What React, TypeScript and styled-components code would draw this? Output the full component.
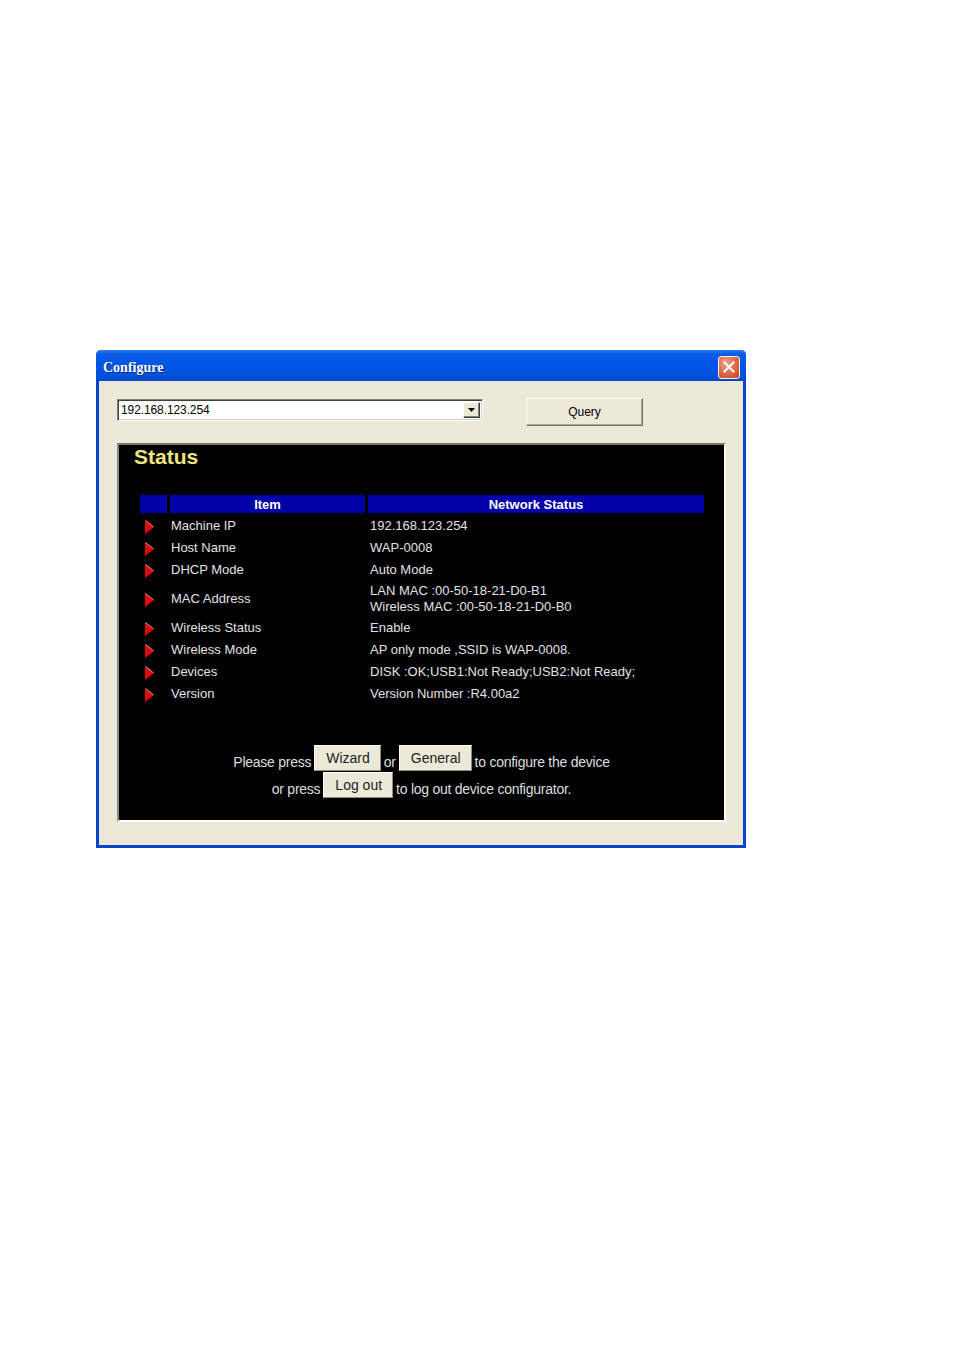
import React from 'react';
import styled, { createGlobalStyle } from 'styled-components';

const Global = createGlobalStyle`
  html, body { margin: 0; padding: 0; background: #ffffff; }
  body { font-family: "Liberation Sans", Arial, sans-serif; }
  * { box-sizing: border-box; }
`;

const Page = styled.div`
  width: 953px;
  height: 1352px;
  padding: 350px 0 0 96px;
`;

const Window = styled.div`
  width: 650px;
  height: 498px;
  display: flex;
  flex-direction: column;
  background: #0845cc;
  border-radius: 5px 5px 0 0;
  overflow: hidden;
`;

const TitleBar = styled.div`
  height: 31px;
  flex: none;
  display: flex;
  align-items: center;
  justify-content: space-between;
  padding: 0 6px 0 7px;
  background: linear-gradient(180deg, #2f7ef0 0%, #0a5ee6 12%, #0055e5 45%, #0052e0 80%, #0047c8 100%);
`;

const Title = styled.span`
  font-family: "Liberation Serif", "Times New Roman", serif;
  font-weight: bold;
  font-size: 14px;
  color: #ffffff;
  text-shadow: 1px 1px 0 #0a2a7a;
  padding-top: 4px;
`;

const CloseBtn = styled.div`
  width: 22px;
  height: 23px;
  border: 1px solid #f4f0ee;
  border-radius: 3px;
  background: radial-gradient(circle at 35% 30%, #f0a58a 0%, #e0704c 45%, #c8431f 100%);
  display: flex;
  align-items: center;
  justify-content: center;
  margin-top: 3px;
`;

const Body = styled.div`
  flex: 1;
  margin: 0 3px 3px 3px;
  background: #ece9d8;
  padding: 17px 17px 0 18px;
  display: flex;
  flex-direction: column;
`;

const TopRow = styled.div`
  display: flex;
  align-items: flex-start;
  gap: 43px;
`;

const Combo = styled.div`
  width: 366px;
  height: 22px;
  margin-top: 1px;
  background: #ffffff;
  border-top: 1px solid #808080;
  border-left: 1px solid #808080;
  border-right: 1px solid #ffffff;
  border-bottom: 1px solid #ffffff;
  box-shadow: inset 1px 1px 0 #404040, inset -1px -1px 0 #d4d0c8;
  display: flex;
  align-items: center;
  justify-content: space-between;
  padding: 2px 2px 2px 3px;
`;

const ComboText = styled.span`
  font-size: 12px;
  color: #000000;
  letter-spacing: -0.1px;
`;

const DropBtn = styled.div`
  width: 17px;
  height: 16px;
  background: #ece9d8;
  border-top: 1px solid #ffffff;
  border-left: 1px solid #ffffff;
  border-right: 1px solid #404040;
  border-bottom: 1px solid #404040;
  box-shadow: inset -1px -1px 0 #808080;
  display: flex;
  align-items: center;
  justify-content: center;
`;

const QueryBtn = styled.div`
  width: 117px;
  height: 28px;
  background: #ece9d8;
  border-top: 1px solid #ffffff;
  border-left: 1px solid #ffffff;
  border-right: 1px solid #716f64;
  border-bottom: 1px solid #716f64;
  box-shadow: inset -1px -1px 0 #aca899;
  display: flex;
  align-items: center;
  justify-content: center;
  font-size: 12px;
  color: #000000;
`;

const Panel = styled.div`
  margin-top: 17px;
  width: 609px;
  height: 379px;
  background: #000000;
  border-top: 2px solid #7a7a72;
  border-left: 2px solid #8a8a82;
  border-right: 2px solid #ffffff;
  border-bottom: 2px solid #ffffff;
  display: flex;
  flex-direction: column;
`;

const StatusTitle = styled.div`
  padding-left: 15px;
  font-size: 21px;
  line-height: 24px;
  font-weight: bold;
  color: #f1e47c;
`;

const Table = styled.div`
  margin: 26px 0 0 21px;
  width: 564px;
  display: grid;
  grid-template-columns: 27px 195px 336px;
  column-gap: 3px;
`;

const HeadCell = styled.div`
  height: 18px;
  margin-bottom: 1px;
  background: #0000a8;
  color: #ffffff;
  font-weight: bold;
  font-size: 13px;
  display: flex;
  align-items: center;
  justify-content: center;
`;

const Cell = styled.div<{ $tall?: boolean }>`
  min-height: ${p => (p.$tall ? 36 : 22)}px;
  display: flex;
  flex-direction: column;
  justify-content: center;
  font-size: 13px;
  line-height: 16px;
  color: #e2e2e2;
  padding-top: 1px;
`;

const IconCell = styled(Cell)`
  padding-left: 5px;
  padding-top: 3px;
`;

const ItemCell = styled(Cell)`
  padding-left: 1px;
`;

const ValueCell = styled(Cell)`
  padding-left: 2px;
`;

const Bottom = styled.div`
  margin-top: 41px;
  display: flex;
  flex-direction: column;
  align-items: center;
  gap: 1px;
`;

const Line = styled.div`
  display: flex;
  align-items: center;
  gap: 3px;
`;

const LineText = styled.span`
  font-size: 14px;
  letter-spacing: -0.25px;
  color: #dedede;
  padding-top: 8px;
  line-height: 16px;
`;

const PanelBtn = styled.div`
  height: 26px;
  padding: 0 10px 0 11px;
  background: #ece9d8;
  border-top: 1px solid #ffffff;
  border-left: 1px solid #ffffff;
  border-right: 1px solid #8d8b80;
  border-bottom: 1px solid #8d8b80;
  display: flex;
  align-items: center;
  font-size: 14px;
  color: #222222;
`;

const Arrow = () => (
  <svg width="10" height="14" viewBox="0 0 10 14">
    <polygon points="0,0 9,7 0,14" fill="#e00808" />
    <line x1="0.5" y1="0.5" x2="8.5" y2="6.8" stroke="#b9a0a0" strokeWidth="1" />
  </svg>
);

const rows: { item: string; value: string[] }[] = [
  { item: 'Machine IP', value: ['192.168.123.254'] },
  { item: 'Host Name', value: ['WAP-0008'] },
  { item: 'DHCP Mode', value: ['Auto Mode'] },
  { item: 'MAC Address', value: ['LAN MAC :00-50-18-21-D0-B1', 'Wireless MAC :00-50-18-21-D0-B0'] },
  { item: 'Wireless Status', value: ['Enable'] },
  { item: 'Wireless Mode', value: ['AP only mode ,SSID is WAP-0008.'] },
  { item: 'Devices', value: ['DISK :OK;USB1:Not Ready;USB2:Not Ready;'] },
  { item: 'Version', value: ['Version Number :R4.00a2'] },
];

export default function App() {
  return (
    <>
      <Global />
      <Page>
        <Window>
          <TitleBar>
            <Title>Configure</Title>
            <CloseBtn>
              <svg width="12" height="12" viewBox="0 0 12 12">
                <path d="M1.5 1.5 L10.5 10.5 M10.5 1.5 L1.5 10.5" stroke="#ffffff" strokeWidth="2" strokeLinecap="square" />
              </svg>
            </CloseBtn>
          </TitleBar>
          <Body>
            <TopRow>
              <Combo>
                <ComboText>192.168.123.254</ComboText>
                <DropBtn>
                  <svg width="7" height="4" viewBox="0 0 7 4">
                    <polygon points="0,0 7,0 3.5,4" fill="#000000" />
                  </svg>
                </DropBtn>
              </Combo>
              <QueryBtn>Query</QueryBtn>
            </TopRow>
            <Panel>
              <StatusTitle>Status</StatusTitle>
              <Table>
                <HeadCell />
                <HeadCell>Item</HeadCell>
                <HeadCell>Network Status</HeadCell>
                {rows.map(r => {
                  const tall = r.value.length > 1;
                  return (
                    <React.Fragment key={r.item}>
                      <IconCell $tall={tall}>
                        <Arrow />
                      </IconCell>
                      <ItemCell $tall={tall}>{r.item}</ItemCell>
                      <ValueCell $tall={tall}>
                        {r.value.map(v => (
                          <span key={v}>{v}</span>
                        ))}
                      </ValueCell>
                    </React.Fragment>
                  );
                })}
              </Table>
              <Bottom>
                <Line>
                  <LineText>Please press</LineText>
                  <PanelBtn>Wizard</PanelBtn>
                  <LineText>or</LineText>
                  <PanelBtn>General</PanelBtn>
                  <LineText>to configure the device</LineText>
                </Line>
                <Line>
                  <LineText>or press</LineText>
                  <PanelBtn>Log out</PanelBtn>
                  <LineText>to log out device configurator.</LineText>
                </Line>
              </Bottom>
            </Panel>
          </Body>
        </Window>
      </Page>
    </>
  );
}
